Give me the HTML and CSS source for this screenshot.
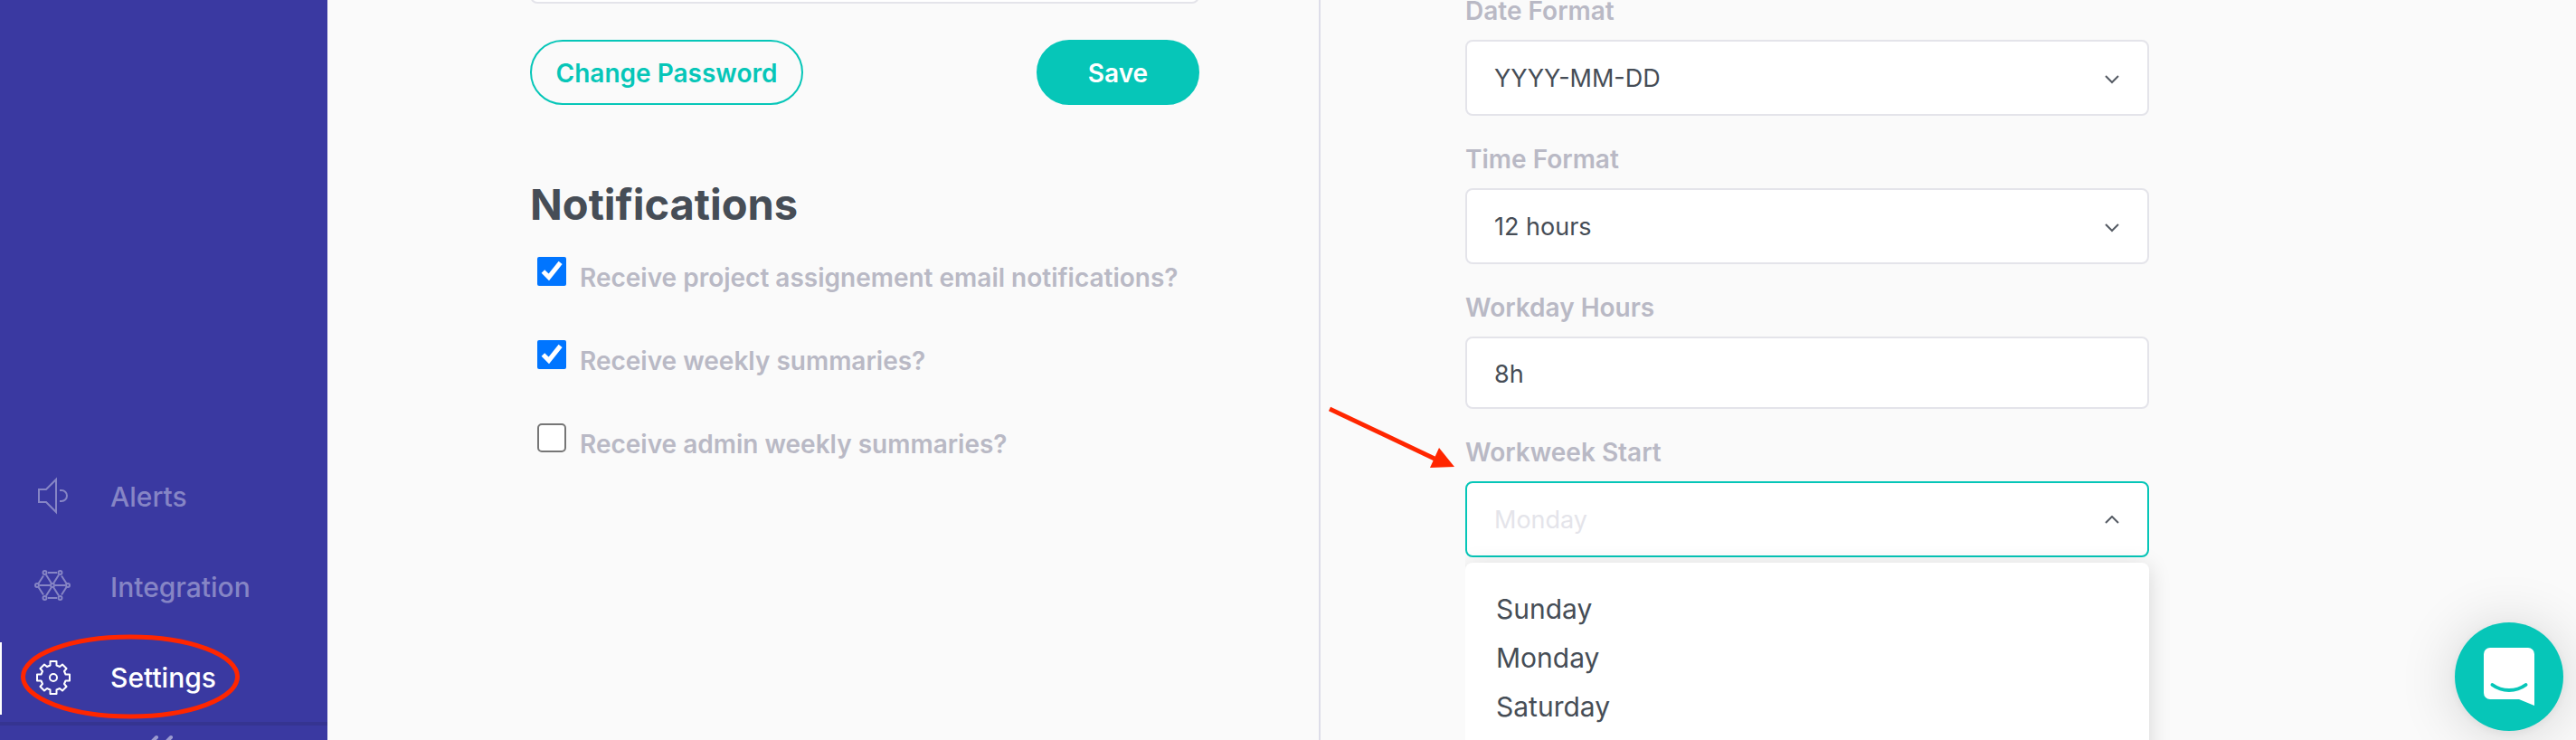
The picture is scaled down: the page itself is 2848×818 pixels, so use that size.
FILE: index.html
```
<!DOCTYPE html>
<html lang="en">
<head>
    <meta charset="UTF-8">
    <meta name="viewport" content="width=device-width, initial-scale=1.0">
    <title>Settings</title>
    <link rel="stylesheet" href="styles.css">
</head>
<body>
    <aside class="sidebar">
        <nav class="menu">
            <a href="#alerts" class="menu-item">
                <svg class="menu-icon" viewBox="0 1 40 40" fill="none" stroke="currentColor" stroke-width="2">
                    <path d="M4 13h8L23 2v36L12 27H4zM27 14h2a6 6 0 0 1 0 12h-2"/>
                </svg>
                <span>Alerts</span>
            </a>
            <a href="#integration" class="menu-item">
                <svg class="menu-icon" viewBox="0 1 40 40" fill="none" stroke="currentColor" stroke-width="2">
                    <path d="M14 5h10M14 33h10M5 19h11M22 19h11M12 7.500L18 17M26 7.500L20 17M12 30.500L18 21M26 30.500L20 21M9 8.500L3.500 17M29 8.500L34.500 17M9 29.500L3.500 21M29 29.500L34.500 21"/>
                    <circle cx="10.500" cy="5" r="2"/>
                    <circle cx="27.500" cy="5" r="2"/>
                    <circle cx="2" cy="19" r="2"/>
                    <circle cx="19" cy="19" r="2"/>
                    <circle cx="36" cy="19" r="2"/>
                    <circle cx="10.500" cy="33" r="2"/>
                    <circle cx="27.500" cy="33" r="2"/>
                </svg>
                <span>Integration</span>
            </a>
            <a href="#settings" class="menu-item active">
                <svg class="menu-icon" viewBox="0 0 40 40" fill="none" stroke="currentColor" stroke-width="2" stroke-linejoin="round">
                    <path d="M16.500 2h7v4.500L27 8l3-2.500 4.500 4.500L32 13l1.500 3.500H38v7h-4.500L32 27l2.500 3-4.500 4.500-3-2.500-3.500 1.500V38h-7v-4.500L13 32l-3 2.500L5.500 30 8 27l-1.500-3.500H2v-7h4.500L8 13l-2.500-3L10 5.500 13 8l3.500-1.500z"/>
                    <circle cx="20" cy="20" r="4"/>
                </svg>
                <span>Settings</span>
                <svg class="highlight" viewBox="0 0 244 94" fill="none" stroke="#ff2600" stroke-width="5">
                    <ellipse cx="122" cy="47" rx="118.500" ry="44"/>
                </svg>
            </a>
        </nav>
        <button type="button" class="collapse" aria-label="Collapse menu">
            <svg width="32" height="32" viewBox="0 0 32 32" fill="none" stroke="currentColor" stroke-width="4" stroke-linecap="round">
                <path d="M8 3L-3 14l11 11M24 3L13 14l11 11"/>
            </svg>
        </button>
    </aside>

    <main class="content">
        <section class="panel profile">
            <input type="password" class="control" aria-label="Password">
            <div class="actions">
                <button type="button" class="btn btn-outline">Change Password</button>
                <button type="button" class="btn btn-save">Save</button>
            </div>

            <h2>Notifications</h2>
            <div class="checks">
                <label class="check">
                    <input type="checkbox" checked>
                    <span>Receive project assignement email notifications?</span>
                </label>
                <label class="check">
                    <input type="checkbox" checked>
                    <span>Receive weekly summaries?</span>
                </label>
                <label class="check">
                    <input type="checkbox">
                    <span>Receive admin weekly summaries?</span>
                </label>
            </div>
        </section>

        <section class="panel preferences">
            <div class="field">
                <label for="dateFormat">Date Format</label>
                <div class="select">
                    <select id="dateFormat" class="control">
                        <option>YYYY-MM-DD</option>
                    </select>
                    <svg class="chevron" viewBox="0 0 20 12"><path d="M3 2l7 7 7-7"/></svg>
                </div>
            </div>
            <div class="field">
                <label for="timeFormat">Time Format</label>
                <div class="select">
                    <select id="timeFormat" class="control">
                        <option>12 hours</option>
                    </select>
                    <svg class="chevron" viewBox="0 0 20 12"><path d="M3 2l7 7 7-7"/></svg>
                </div>
            </div>
            <div class="field">
                <label for="workdayHours">Workday Hours</label>
                <input type="text" id="workdayHours" class="control" value="8h">
            </div>
            <div class="field">
                <label for="workweekStart">Workweek Start</label>
                <div class="select open">
                    <select id="workweekStart" class="control">
                        <option>Monday</option>
                    </select>
                    <svg class="chevron" viewBox="0 0 20 12"><path d="M3 8l7-7 7 7"/></svg>
                    <ul class="dropdown" role="listbox">
                        <li role="option">Sunday</li>
                        <li role="option">Monday</li>
                        <li role="option">Saturday</li>
                    </ul>
                </div>
                <svg class="arrow" viewBox="0 0 146 80">
                    <path d="M6 6L122 61" stroke="#ff2600" stroke-width="5"/>
                    <path d="M144 70l-17-21-10 22z" fill="#ff2600"/>
                </svg>
            </div>
        </section>
    </main>

    <button type="button" class="chat" aria-label="Open chat">
        <svg width="56" height="64" viewBox="0 0 56 64">
            <path d="M7 0h42a7 7 0 0 1 7 7v57l-17-7H7a7 7 0 0 1-7-7V7a7 7 0 0 1 7-7z" fill="#fff"/>
            <path d="M9.500 41c11 8 26 8 37 0" fill="none" stroke="#06c6b8" stroke-width="4" stroke-linecap="round"/>
        </svg>
    </button>
</body>
</html>
```
FILE: styles.css
```
* {
    box-sizing: border-box;
}

body {
    display: flex;
    height: 100vh;
    margin: 0;
    overflow: hidden;
    background-color: #fafafa;
    color: #464d56;
    font-family: Inter, "Liberation Sans", sans-serif;
    font-size: 28px;
    line-height: 32px;
}

button,
input,
select {
    font: inherit;
}

button {
    cursor: pointer;
}

/* sidebar */
.sidebar {
    display: flex;
    flex: 0 0 362px;
    flex-direction: column;
    justify-content: flex-end;
    background-color: #3a39a1;
}

.menu {
    display: flex;
    flex-direction: column;
    gap: 20px;
    padding-bottom: 8px;
    border-bottom: 4px solid #353491;
}

.menu-item {
    position: relative;
    display: flex;
    align-items: center;
    gap: 43px;
    height: 80px;
    padding: 0 0 2px 37px;
    border-left: 2px solid transparent;
    color: #8685c5;
    font-size: 30px;
    font-weight: 500;
    text-decoration: none;
}

.menu-item.active {
    border-left-color: #fff;
    color: #fff;
}

.menu-icon {
    width: 40px;
    height: 40px;
    overflow: visible;
}

.highlight {
    position: absolute;
    top: -9px;
    left: 20px;
    width: 244px;
    height: 94px;
}

.collapse {
    height: 16px;
    padding: 10px 0 0;
    overflow: hidden;
    border: none;
    background: none;
    color: #9c9bd0;
}

.collapse svg {
    display: block;
    margin: 0 auto;
    overflow: visible;
}

/* content */
.content {
    display: grid;
    flex: 1;
    grid-template-columns: 1098fr 1388fr;
    overflow: hidden;
}

.profile {
    padding: 0 132px 0 224px;
    border-right: 2px solid #dddde9;
}

.preferences {
    padding: 0 472px 0 160px;
}

.control {
    width: 100%;
    height: 80px;
    padding: 2px 30px 0;
    border: 2px solid #e4e4ea;
    border-radius: 8px;
    background-color: #fff;
    color: #464d56;
    font-size: 27px;
}

.profile > .control {
    display: block;
    margin-top: -76px;
}

.actions {
    display: flex;
    justify-content: space-between;
    margin: 40px 0 80px;
}

.btn {
    height: 72px;
    padding: 2px 0 0;
    border: 2px solid #06c6b8;
    border-radius: 36px;
    font-weight: 600;
}

.btn-outline {
    width: 302px;
    background: none;
    color: #06c6b8;
}

.btn-save {
    width: 180px;
    background-color: #06c6b8;
    color: #fff;
}

h2 {
    margin: 0 0 28px;
    font-size: 47px;
    font-weight: 700;
    line-height: 60px;
}

.checks {
    display: flex;
    flex-direction: column;
    gap: 52px;
}

.check {
    display: flex;
    gap: 15px;
    height: 40px;
    padding-left: 8px;
}

.check input {
    width: 32px;
    height: 32px;
    margin: 0;
}

.check input:not(:checked) {
    appearance: none;
    border: 2px solid #767676;
    border-radius: 5px;
    background-color: #fff;
}

.check span {
    padding-top: 7px;
}

.check span,
.field label {
    color: #b9b9c5;
    font-weight: 600;
}

.field {
    position: relative;
    margin-bottom: 36px;
}

.field label {
    display: block;
    padding-bottom: 20px;
    line-height: 24px;
}

.select {
    position: relative;
}

.select .control {
    display: block;
    height: 84px;
    appearance: none;
}

.select.open .control {
    border-color: #06c6b8;
    color: #e4e4ea;
}

.chevron {
    position: absolute;
    top: 38px;
    right: 31px;
    width: 20px;
    height: 12px;
    fill: none;
    stroke: #555b64;
    stroke-width: 2;
    pointer-events: none;
}

.dropdown {
    position: absolute;
    top: 90px;
    right: 0;
    left: 0;
    height: 240px;
    margin: 0;
    padding: 24px 34px;
    border-radius: 8px;
    background-color: #fff;
    box-shadow: 0 4px 24px rgba(0, 0, 0, 0.15);
    clip-path: inset(-24px -30px 0 0);
    font-size: 30px;
    line-height: 54px;
    list-style: none;
}

.arrow {
    position: absolute;
    top: -42px;
    left: -156px;
    width: 146px;
    height: 80px;
    fill: none;
}

/* chat launcher */
.chat {
    position: fixed;
    right: 14px;
    bottom: 10px;
    display: flex;
    align-items: center;
    justify-content: center;
    width: 120px;
    height: 120px;
    border: none;
    border-radius: 50%;
    background-color: #06c6b8;
    box-shadow: 0 2px 12px rgba(0, 0, 0, 0.06), 0 4px 64px rgba(0, 0, 0, 0.16);
}
```
